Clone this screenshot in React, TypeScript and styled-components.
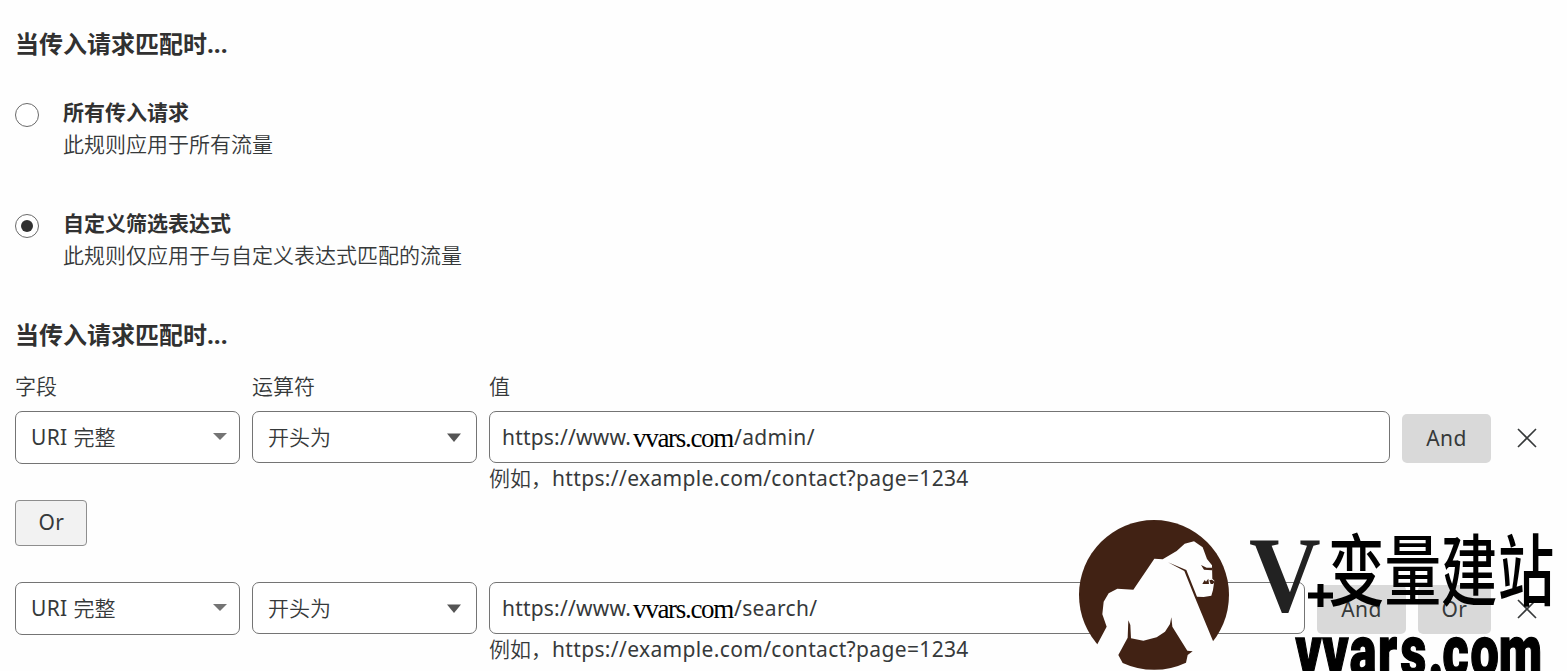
import React from 'react';
import styled, { createGlobalStyle } from 'styled-components';

const GlobalStyle = createGlobalStyle`
  *, *::before, *::after { box-sizing: border-box; }
  html, body { margin: 0; padding: 0; background: #fefefe; overflow: hidden; }
  body { font-family: 'Noto Sans', 'Noto Sans CJK SC', sans-serif; font-size: 21px; color: #36393a; }
`;

const Page = styled.main`
  position: relative;
  width: 1567px;
  height: 671px;
  padding: 26px 0 0 15px;
  overflow: hidden;
  background: #fefefe;
`;

const Heading = styled.h2`
  margin: 0;
  height: 36px;
  font: 700 24px/36px 'Open Sans', 'Noto Sans CJK SC', sans-serif;
  color: #313131;
  white-space: nowrap;
`;

const Options = styled.div`
  display: flex;
  flex-direction: column;
  gap: 47px;
  margin: 33px 0 47px;
`;

const Option = styled.label`
  display: flex;
  gap: 24px;
  height: 64px;
`;

const Radio = styled.span<{ $checked?: boolean }>`
  display: flex;
  align-items: center;
  justify-content: center;
  width: 24px;
  height: 24px;
  margin-top: 8px;
  border: 1px solid #6a6a6a;
  border-radius: 50%;
  background: #fff;
  &::after {
    content: '';
    width: 12px;
    height: 12px;
    border-radius: 50%;
    background: ${(p) => (p.$checked ? '#313131' : 'transparent')};
  }
`;

const OptionText = styled.span`
  display: flex;
  flex-direction: column;
  font-family: 'Noto Sans CJK SC', sans-serif;
  line-height: 32px;
  white-space: nowrap;
`;

const OptionTitle = styled.strong`
  font-weight: 700;
  color: #313131;
`;

const OptionNote = styled.span`
  font-weight: 350;
`;

const Rule = styled.div<{ $top: number }>`
  display: grid;
  grid-template-columns: 225px 225px 1fr;
  column-gap: 12px;
  margin-top: ${(p) => p.$top}px;
  padding-right: 24px;
`;

const Label = styled.span`
  height: 32px;
  margin-bottom: 9px;
  font-weight: 350;
  line-height: 32px;
`;

const Select = styled.div<{ $tall?: boolean }>`
  display: flex;
  align-items: center;
  justify-content: space-between;
  height: ${(p) => (p.$tall ? 53 : 52)}px;
  padding: 0 ${(p) => (p.$tall ? 12 : 15)}px ${(p) => (p.$tall ? 1 : 0)}px 15px;
  border: 1px solid #747474;
  border-radius: 7px;
  background: #fff;
  font-weight: 350;
  line-height: 50px;
`;

const Latin = styled.span`
  font-weight: 400;
  letter-spacing: 0.35px;
`;

const ValueRow = styled.div`
  display: flex;
  align-items: center;
  height: 52px;
`;

const Input = styled.div`
  display: flex;
  align-items: center;
  flex: 1;
  height: 52px;
  padding-left: 12px;
  border: 1px solid #747474;
  border-radius: 7px;
  background: #fff;
  line-height: 50px;
  white-space: nowrap;
`;

const UrlStart = styled.span`
  width: 131px;
  letter-spacing: 0.2px;
`;

const Host = styled.span`
  width: 101px;
  padding-top: 2px;
  font: 27px/50px 'Liberation Serif', serif;
  letter-spacing: -1.3px;
  color: #000;
`;

const Button = styled.button<{ $wide?: boolean }>`
  flex: none;
  width: ${(p) => (p.$wide ? 89 : 73)}px;
  height: 49px;
  margin: 3px 0 0 12px;
  padding: 0 0 1px;
  border: 0;
  border-radius: 5px;
  background: #d9d9d9;
  color: #36393a;
  font: 400 21px/48px 'Noto Sans', sans-serif;
  letter-spacing: 0.4px;
`;

const OrButton = styled(Button)`
  display: block;
  width: 72px;
  height: 46px;
  margin: 5px 0 0;
  padding: 0 0 2px 1px;
  border: 1px solid #8e8e8e;
  border-radius: 4px;
  background: #f2f2f2;
  line-height: 42px;
`;

const CloseIcon = styled.svg`
  flex: none;
  width: 20px;
  height: 20px;
  margin: 2px 6px 0 26px;
`;

const Hint = styled.div`
  height: 32px;
  font-weight: 350;
  line-height: 31px;
  white-space: nowrap;
`;

const Brand = styled.svg`
  position: absolute;
  left: 1060px;
  top: 500px;
  width: 507px;
  height: 171px;
`;

const Caret = ({ large }: { large?: boolean }) => (
  <svg width="14" height="10" viewBox="0 0 14 10">
    {large ? <path d="M0 1.5H14L7 10Z" fill="#555" /> : <path d="M0 1H14L7 8Z" fill="#747474" />}
  </svg>
);

const Close = () => (
  <CloseIcon viewBox="0 0 20 20">
    <path d="M1 1 19 19M19 1 1 19" fill="none" stroke="#36393a" strokeWidth="1.6" />
  </CloseIcon>
);

type RuleProps = { top: number; path: string; labels?: boolean; withOr?: boolean };

const RuleRow = ({ top, path, labels, withOr }: RuleProps) => (
  <Rule $top={top}>
    {labels && (
      <>
        <Label>字段</Label>
        <Label>运算符</Label>
        <Label>值</Label>
      </>
    )}
    <Select $tall>
      <span><Latin>URI </Latin>完整</span>
      <Caret />
    </Select>
    <Select>
      <span>开头为</span>
      <Caret large />
    </Select>
    <div>
      <ValueRow>
        <Input>
          <UrlStart>https://www.</UrlStart>
          <Host>vvars.com</Host>
          <Latin>{path}</Latin>
        </Input>
        <Button $wide>And</Button>
        {withOr && <Button>Or</Button>}
        <Close />
      </ValueRow>
      <Hint>例如，<Latin>https://example.com/contact?page=1234</Latin></Hint>
    </div>
  </Rule>
);

const BrandMark = () => (
  <Brand viewBox="0 0 507 171">
    <g transform="scale(.33333)">
      <circle cx="282" cy="285" r="225" fill="#412214" />
      <path fill="#fefefe" d="M112 433 140 380 127 343 131 305 146 280 172 266 220 269 283 176 308 178 350 153 374 131 402 124 428 142 441 177 456 196 457 236 463 242 459 270 454 287 431 291 411 290 379 210 324 187 373 213 404 290 459 423 470 500 400 540 150 540 90 480Z" />
      <path fill="#412214" d="M205 361 211 375 213 415 250 422 290 412 315 395 330 372 334 352 337 380 382 452 398 454 383 465 378 488A225 225 0 0 1 188 489L175 465 203 413Z" />
      <path fill="#412214" d="M423 195 440 203 458 203 456 211 432 209ZM427 252 434 240 438 245 445 236 447 252ZM448 241 456 239 464 245 459 252 452 252Z" />
    </g>
    <text transform="translate(189 111) scale(.92 1)" fontFamily="Liberation Serif, serif" fontWeight="700" fontSize="108" fill="#222">V</text>
    <path d="M248 95.500H273M260.500 84V107" stroke="#000" strokeWidth="6" />
    <text transform="translate(268 100) scale(1.01 1.4)" fontFamily="Noto Sans CJK SC, sans-serif" fontWeight="500" fontSize="56" fill="#000">变量建站</text>
    <text transform="translate(235.500 176) scale(.69 1)" x="0 39 78.500 119.500 152 192.500 213 253.500 294.500" fontFamily="Roboto, sans-serif" fontWeight="900" fontSize="73" fill="#000" stroke="#000" strokeWidth="1.5">vvars.com</text>
  </Brand>
);

export default function App() {
  return (
    <>
      <GlobalStyle />
      <Page>
        <Heading>当传入请求匹配时...</Heading>
        <Options>
          <Option>
            <Radio />
            <OptionText>
              <OptionTitle>所有传入请求</OptionTitle>
              <OptionNote>此规则应用于所有流量</OptionNote>
            </OptionText>
          </Option>
          <Option>
            <Radio $checked />
            <OptionText>
              <OptionTitle>自定义筛选表达式</OptionTitle>
              <OptionNote>此规则仅应用于与自定义表达式匹配的流量</OptionNote>
            </OptionText>
          </Option>
        </Options>
        <Heading>当传入请求匹配时...</Heading>
        <RuleRow top={17} path="/admin/" labels />
        <OrButton>Or</OrButton>
        <RuleRow top={36} path="/search/" withOr />
        <BrandMark />
      </Page>
    </>
  );
}
